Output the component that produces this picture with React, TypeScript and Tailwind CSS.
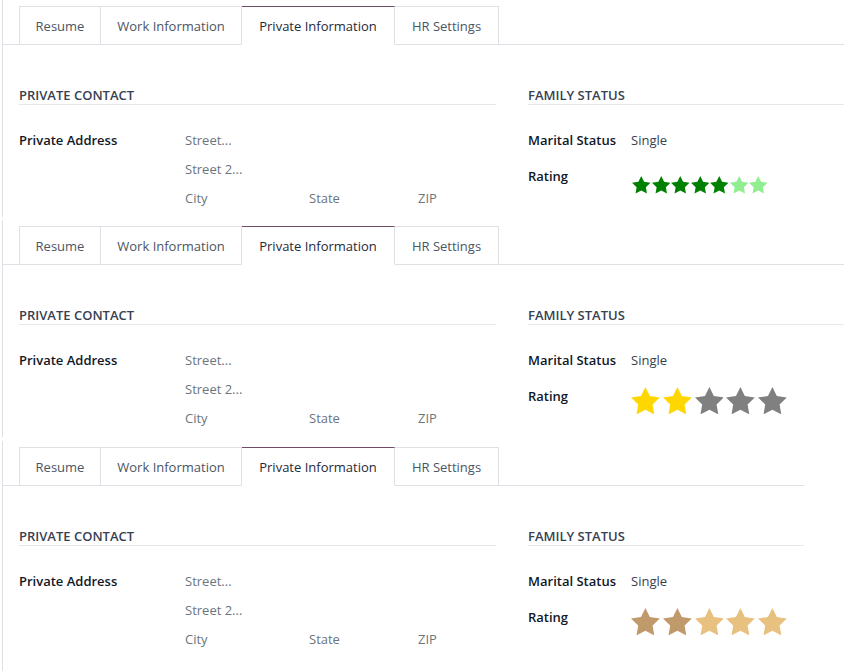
import React from "react";

const STAR_POINTS =
  "10,0 13.09,6.26 20,7.27 15,12.14 16.18,19.02 10,15.77 3.82,19.02 5,12.14 0,7.27 6.91,6.26";

function Star({ size, color }: { size: number; color: string }) {
  return (
    <svg width={size} height={size * 0.951} viewBox="0 0 20 19.02" className="block shrink-0">
      <polygon points={STAR_POINTS} fill={color} />
    </svg>
  );
}

type StarCfg = { colors: string[]; size: number; gap: string };

const tabs = ["Resume", "Work Information", "Private Information", "HR Settings"];
const tabW = ["w-[82px]", "w-[141px]", "w-[153px]", "w-[104px]"];

function Panel({ widthClass, stars, extra }: { widthClass: string; stars: StarCfg; extra: string }) {
  return (
    <div className={`${widthClass} ${extra} ml-[2px] h-[217px] border-l border-[#dcdfe3] overflow-visible`}>
      {/* tab bar */}
      <div className="flex pt-[6px] pl-[16px] border-b border-[#dee2e6]">
        {tabs.map((t, i) => {
          const active = i === 2;
          return (
            <div
              key={t}
              className={`${tabW[i]} h-[39px] -mb-px pt-[2px] flex items-center justify-center text-[13px] border-t border-r ${
                i === 0 ? "border-l" : ""
              } ${
                active
                  ? "border-t-[#714b67] border-r-[#dee2e6] border-l-[#dee2e6] border-b border-b-white bg-white text-[#1f2937]"
                  : "border-[#dee2e6] border-b text-[#4b5563]"
              }`}
            >
              {t}
            </div>
          );
        })}
      </div>
      {/* content */}
      <div className="flex pl-[16px] pt-[40px]">
        <div className="w-[477px] shrink-0">
          <div className="h-[20px] pt-[1px] leading-[19px] font-semibold text-[13px] text-[#374151] border-b border-[#e5e7eb]">
            PRIVATE CONTACT
          </div>
          <div className="flex mt-[21px]">
            <div className="w-[166px] shrink-0 h-[29px] flex items-center font-semibold text-[13px] text-[#111827]">
              Private Address
            </div>
            <div className="flex-1 text-[13px] text-[#6c757d]">
              <div className="h-[29px] flex items-center">Street...</div>
              <div className="h-[29px] flex items-center">Street 2...</div>
              <div className="h-[29px] flex items-center">
                <div className="w-[124px]">City</div>
                <div className="w-[109px]">State</div>
                <div className="flex-1">ZIP</div>
              </div>
            </div>
          </div>
        </div>
        <div className="flex-1 ml-[32px]">
          <div className="h-[20px] pt-[1px] leading-[19px] font-semibold text-[13px] text-[#374151] border-b border-[#e5e7eb]">
            FAMILY STATUS
          </div>
          <div className="flex mt-[21px] h-[29px] items-center text-[13px]">
            <div className="w-[103px] shrink-0 font-semibold text-[#111827]">Marital Status</div>
            <div className="text-[#374151]">Single</div>
          </div>
          <div className="flex mt-[11px] text-[13px]">
            <div className="w-[103px] shrink-0 font-semibold text-[#111827] leading-[21px]">Rating</div>
            <div className={`h-[28px] flex items-end ${stars.gap}`}>
              {stars.colors.map((c, i) => (
                <Star key={i} size={stars.size} color={c} />
              ))}
            </div>
          </div>
        </div>
      </div>
    </div>
  );
}

export default function App() {
  const green: StarCfg = {
    colors: ["#008000", "#008000", "#008000", "#008000", "#008000", "#90ee90", "#90ee90"],
    size: 18.5,
    gap: "gap-[1px] ml-[1px]",
  };
  const gold: StarCfg = {
    colors: ["#ffd700", "#ffd700", "#808080", "#808080", "#808080"],
    size: 28.8,
    gap: "gap-[3px]",
  };
  const tan: StarCfg = {
    colors: ["#c19a6b", "#c19a6b", "#e8c180", "#e8c180", "#e8c180"],
    size: 28.8,
    gap: "gap-[3px]",
  };
  return (
    <div
      className="bg-white w-[861px] h-[671px] overflow-hidden"
      style={{ fontFamily: '"Open Sans", "Noto Sans", sans-serif' }}
    >
      <Panel widthClass="w-[842px]" stars={green} extra="mb-[3px]" />
      <Panel widthClass="w-[842px]" stars={gold} extra="mb-[4px]" />
      <Panel widthClass="w-[802px]" stars={tan} extra="h-[231px]" />
    </div>
  );
}
